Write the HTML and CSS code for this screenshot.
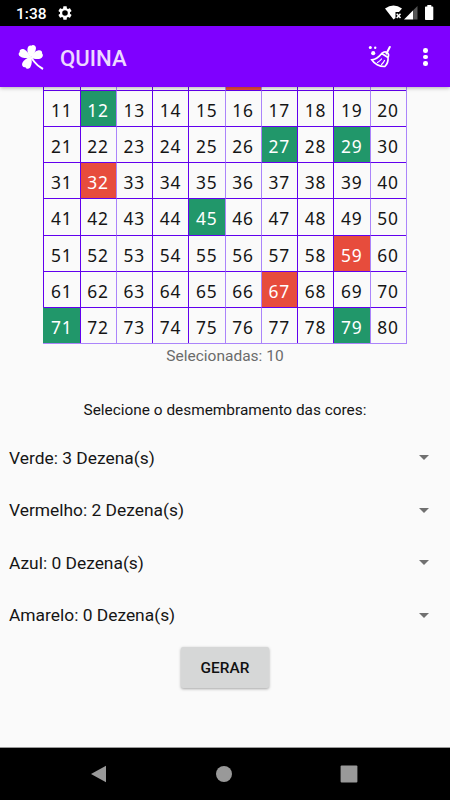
FILE: index.html
```html
<!DOCTYPE html>
<html lang="pt-br">
<head>
    <meta charset="utf-8" />
    <title>Quina</title>
    <link rel="stylesheet" href="styles.css">
</head>
<body>
    <div class="status-bar">
        <span class="clock">1:38</span>
        <svg class="gear" viewBox="0 0 24 24"><path d="M19.43 12.98c.04-.32.07-.64.07-.98s-.03-.66-.07-.98l2.11-1.65c.19-.15.24-.42.12-.64l-2-3.46c-.12-.22-.39-.3-.61-.22l-2.49 1c-.52-.4-1.08-.73-1.69-.98l-.38-2.65C14.46 2.18 14.25 2 14 2h-4c-.25 0-.46.18-.49.42l-.38 2.65c-.61.25-1.17.59-1.69.98l-2.49-1c-.23-.09-.49 0-.61.22l-2 3.46c-.13.22-.07.49.12.64l2.11 1.65c-.04.32-.07.65-.07.98s.03.66.07.98l-2.11 1.65c-.19.15-.24.42-.12.64l2 3.46c.12.22.39.3.61.22l2.49-1c.52.4 1.08.73 1.69.98l.38 2.65c.03.24.24.42.49.42h4c.25 0 .46-.18.49-.42l.38-2.65c.61-.25 1.17-.59 1.69-.98l2.49 1c.23.09.49 0 .61-.22l2-3.46c.12-.22.07-.49-.12-.64l-2.11-1.65zM12 16.200a4.200 4.200 0 1 1 0-8.400 4.200 4.200 0 0 1 0 8.400z"/></svg>
        <svg class="signals" viewBox="0 0 50 16">
            <path d="M0 3.600Q8.500-2.600 17 3.600L14 7H10.500V13L8.500 14.500z"/>
            <path class="cross" d="M11.700 8.700l3.800 4.300M15.500 8.700l-3.800 4.300"/>
            <path d="M19 14.500L28.200 5.300V14.500z"/>
            <path class="dim" d="M28.200 5.300L32.500 1V14.500H28.200z"/>
            <path d="M42.300 0h4v1.500h1.300q.7 0 .7.700v12q0 .7-.7.700h-6.900q-.7 0-.7-.7v-12q0-.7.700-.7h1.600z"/>
        </svg>
    </div>
    <header>
        <svg class="clover" viewBox="0 0 26 26">
            <path d="M12.700 13.500C10 10.500 8.800 6.500 9.600 4.200 10.200 2.200 11.500 1 13.200 1.700 15 0 17.800 1.500 18 4 18.200 7 15.500 10.500 12.700 13.500z"/>
            <path d="M12.700 13.500C9 14.200 5.500 14.500 3 13 .5 11.900-.2 9.500 1.800 8 1.100 5.800 3.600 4.200 6.500 5.500 8.800 6.600 11 9.600 12.700 13.500z"/>
            <path d="M12.700 13.500C14.500 9.500 17.500 6.800 20.500 6.200 23 5.800 24.700 7.300 24 9.300 25.800 11 24.800 14 22.100 14.700 19.500 15.400 15.800 15 12.700 13.500z"/>
            <path d="M12.700 12.800C14.500 16.500 14 20.500 12.200 23.400 10.700 25.200 8.400 25.200 7.500 23.200 5 23.600 3.400 21.800 4.300 19 5.500 16 9 14 12.700 12.800z"/>
            <path class="stem" d="M13 13.500L16.500 18Q19.500 22 25 25"/>
        </svg>
        <h1>QUINA</h1>
        <svg class="broom" viewBox="0 0 24 24">
            <circle cx="2.300" cy="2.400" r="1.500"/>
            <circle cx="7.200" cy="2.800" r="1.200"/>
            <circle cx="5.200" cy="8.200" r="2.100"/>
            <path class="line" d="M21.800 2L18.500 8.500"/>
            <path class="line thin" d="M13.700 8.500Q16.500 5.800 19 7.500T20 12.500C20.400 16 19 19.300 16.800 21.500 11.500 21.700 6.200 18.800 3.800 14.800 8 14.500 11 12 13.700 8.500L20 12.500"/>
            <path class="line hair" d="M13.500 14Q11.500 16.500 9.500 17.500M16.500 15.500Q15.300 18 13.500 19.500"/>
        </svg>
        <div class="dots"><i></i><i></i><i></i></div>
    </header>
    <main>
        <div class="board">
            <span></span><span></span><span></span><span></span><span></span><span class="red"></span><span></span><span></span><span></span><span></span>
            <span>11</span><span class="green">12</span><span>13</span><span>14</span><span>15</span><span>16</span><span>17</span><span>18</span><span>19</span><span>20</span>
            <span>21</span><span>22</span><span>23</span><span>24</span><span>25</span><span>26</span><span class="green">27</span><span>28</span><span class="green">29</span><span>30</span>
            <span>31</span><span class="red">32</span><span>33</span><span>34</span><span>35</span><span>36</span><span>37</span><span>38</span><span>39</span><span>40</span>
            <span>41</span><span>42</span><span>43</span><span>44</span><span class="green">45</span><span>46</span><span>47</span><span>48</span><span>49</span><span>50</span>
            <span>51</span><span>52</span><span>53</span><span>54</span><span>55</span><span>56</span><span>57</span><span>58</span><span class="red">59</span><span>60</span>
            <span>61</span><span>62</span><span>63</span><span>64</span><span>65</span><span>66</span><span class="red">67</span><span>68</span><span>69</span><span>70</span>
            <span class="green">71</span><span>72</span><span>73</span><span>74</span><span>75</span><span>76</span><span>77</span><span>78</span><span class="green">79</span><span>80</span>
        </div>
        <p class="count">Selecionadas: 10</p>
        <p class="hint">Selecione o desmembramento das cores:</p>
        <div class="spinner">Verde: 3 Dezena(s)</div>
        <div class="spinner">Vermelho: 2 Dezena(s)</div>
        <div class="spinner">Azul: 0 Dezena(s)</div>
        <div class="spinner">Amarelo: 0 Dezena(s)</div>
        <button class="btn-gerar">GERAR</button>
    </main>
    <nav>
        <svg viewBox="0 0 18 18"><path d="M1 9L16 .7V17.300z"/></svg>
        <svg viewBox="0 0 18 18"><circle cx="9" cy="9" r="8"/></svg>
        <svg viewBox="0 0 18 18"><rect x=".6" y=".6" width="16.800" height="16.800" rx="1"/></svg>
    </nav>
</body>
</html>
```
FILE: styles.css
```css
:root {
    --purple: #7f00ff;
    --line: #6200ee;
    --line-light: #ab84fa;
    --green: #21976a;
    --red: #e74c3c;
}
* {
    box-sizing: border-box;
}
body {
    margin: 0;
    height: 800px;
    display: flex;
    flex-direction: column;
    overflow: hidden;
    background: #fafafa;
    font-family: Roboto, sans-serif;
    color: #151515;
}
svg {
    display: block;
    fill: #fff;
}
.status-bar {
    flex: none;
    height: 26px;
    padding: 0 15px 0 16px;
    display: flex;
    align-items: center;
    background: #000;
    color: #fff;
}
.clock {
    width: 41px;
    padding-top: 2px;
    font-size: 15.5px;
    font-weight: 500;
}
.gear {
    width: 16px;
    height: 16px;
}
.signals {
    width: 50px;
    height: 16px;
    margin: 0 0 0 auto;
}
.cross {
    stroke: #fff;
    stroke-width: 1.5;
}
.dim {
    fill: #555;
}
header {
    flex: none;
    height: 61px;
    padding: 0 20px 0 18px;
    display: flex;
    align-items: center;
    background: var(--purple);
    box-shadow: 0 1px 4px rgba(0, 0, 0, 0.3);
    z-index: 1;
}
.clover {
    width: 26px;
    height: 26px;
}
.stem {
    fill: none;
    stroke: #fff;
    stroke-width: 2;
}
h1 {
    margin: 2px 0 0 16px;
    font-size: 22.2px;
    font-weight: 500;
    color: #ecd9ff;
}
.broom {
    width: 24px;
    height: 24px;
    margin-left: auto;
}
.line {
    fill: none;
    stroke: #fff;
    stroke-width: 2;
    stroke-linecap: round;
}
.thin {
    stroke-width: 1.7;
}
.hair {
    stroke-width: 1.2;
}
.dots {
    display: grid;
    gap: 2px;
    margin: 1px 2px 0 31px;
}
.dots i {
    width: 4.6px;
    height: 4.6px;
    border-radius: 50%;
    background: #fff;
}
main {
    flex: 1;
    min-height: 0;
    overflow: hidden;
    display: flex;
    flex-direction: column;
    align-items: center;
}
/* scrolled so that only the bottom edge of the first row shows */
.board {
    flex: none;
    display: grid;
    grid-template-columns: repeat(10, 36.25px);
    grid-auto-rows: 36.2px;
    margin-top: -33.4px;
    border-right: 1px solid var(--line-light);
    border-bottom: 1px solid var(--line-light);
}
.board span {
    display: flex;
    align-items: center;
    justify-content: center;
    padding: 3px 0 0;
    border-left: 1px solid var(--line);
    border-top: 1px solid var(--line);
    font-family: "Noto Sans", sans-serif;
    font-size: 17.4px;
    letter-spacing: 1px;
}
.board span:nth-child(10n+3),
.board span:nth-child(10n+6),
.board span:nth-child(10n+7),
.board span:nth-child(10n) {
    border-left-color: var(--line-light);
}
.board .green {
    background: var(--green);
    color: #fff;
}
.board .red {
    background: var(--red);
    color: #fff;
}
.board .green:nth-child(10n+1) {
    border-left-color: var(--green);
}
p {
    margin: 0;
}
.count {
    margin-top: 2px;
    font-size: 15.5px;
    line-height: 20px;
    color: #6b6b6b;
}
.hint {
    margin-top: 34px;
    font-size: 15.4px;
    line-height: 20px;
}
.spinner {
    width: 100%;
    height: 52.5px;
    margin: 0;
    padding: 0 21px 0 9px;
    display: flex;
    align-items: center;
    justify-content: space-between;
    font-size: 17.4px;
}
.hint + .spinner {
    margin-top: 11.4px;
}
.spinner::after {
    content: "";
    border: 5px solid transparent;
    border-top-color: #707070;
    border-bottom: 0;
}
.btn-gerar {
    width: 88px;
    height: 41px;
    margin-top: 5.6px;
    border: 0;
    border-radius: 2px;
    background: #d6d7d7;
    box-shadow: 0 1px 3px rgba(0, 0, 0, 0.35);
    font: 500 15.4px Roboto, sans-serif;
    color: #111;
}
nav {
    flex: none;
    height: 53px;
    padding: 0 92px 1px 90px;
    display: flex;
    align-items: center;
    justify-content: space-between;
    background: #000;
    border-top: 1px solid #999;
}
nav svg {
    width: 18px;
    height: 18px;
    fill: #999;
}
```
